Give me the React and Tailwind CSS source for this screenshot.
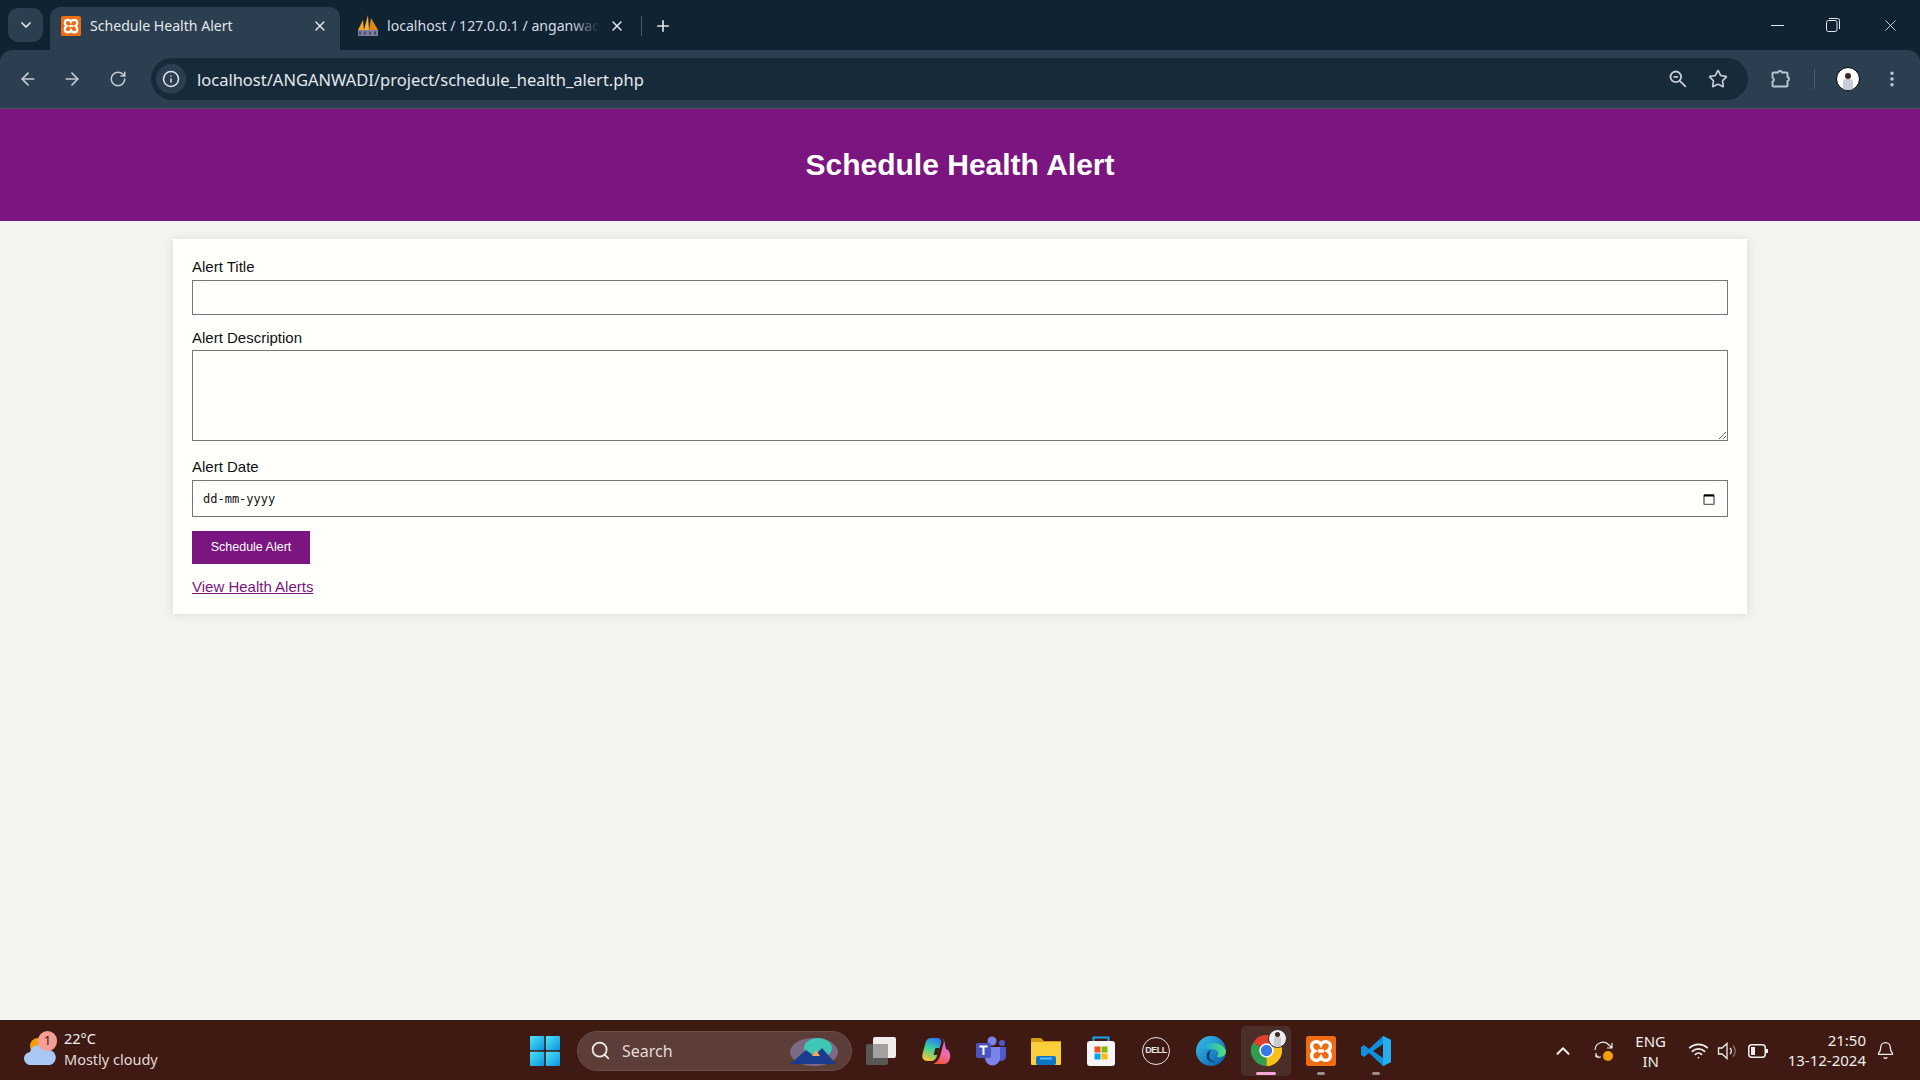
import React from 'react';
import { ArrowLeft, ArrowRight, RotateCw, Info, Star, MoreVertical, X, Plus, ChevronDown, ChevronUp, Search, Wifi, Bell } from 'lucide-react';

function XamppIcon({ size = 20 }) {
  return (
    <svg width={size} height={size} viewBox="0 0 32 32" className="shrink-0">
      <rect width="32" height="32" rx="3" fill="#ee6c14" />
      <path
        d="M11 6c-3 0-5 2-5 5 0 2 1 4 3 5-2 1-3 3-3 5 0 3 2 5 5 5 2 0 4-1 5-3 1 2 3 3 5 3 3 0 5-2 5-5 0-2-1-4-3-5 2-1 3-3 3-5 0-3-2-5-5-5-2 0-4 1-5 3-1-2-3-3-5-3z"
        fill="none"
        stroke="#fff"
        strokeWidth="3.6"
      />
      <path d="M13 16h6" stroke="#fff" strokeWidth="3.6" />
    </svg>
  );
}

function PmaIcon() {
  return (
    <svg width="22" height="22" viewBox="0 0 22 22" className="shrink-0">
      <path d="M1 15 6 5l1 10z" fill="#f5a623" />
      <path d="M7 15 11 0l1 15z" fill="#f9b233" />
      <path d="M12 15 14 3l7 12z" fill="#e08a12" />
      <rect x="1" y="15" width="20" height="6" fill="#7a7d9c" />
      <path d="M3 16.5v3M8 16.5v3M13 16.5v3M18 16.5v3" stroke="#2f3350" strokeWidth="1.4" />
    </svg>
  );
}

function Tab({ active, icon, title, fade }) {
  return (
    <div className={`relative flex items-center h-[43px] w-[290px] rounded-t-[10px] pb-[6px] ${active ? 'bg-[#2b3f50] pl-[11px] pr-[12px]' : 'pl-[9px] pr-[13px]'}`}>
      {icon}
      <span className={`relative font-['Noto_Sans',sans-serif] text-[14.1px] whitespace-nowrap overflow-hidden ${fade ? 'ml-[8px] w-[212px] text-[#d5dde3]' : 'ml-[9px] w-[225px] text-[#e3e8ec]'}`}>
        {title}
        {fade && <span className="absolute right-0 top-0 bottom-0 w-[28px] bg-gradient-to-r from-transparent to-[#0f2333]" />}
      </span>
      <X size={16} strokeWidth={2.2} className="ml-auto text-[#e3e8ec]" />
    </div>
  );
}

function BrowserChrome() {
  return (
    <div className="shrink-0 bg-[#0f2333]">
      <div className="flex items-end h-[50px] pl-[8px]">
        <div className="flex items-center justify-center w-[35px] h-[34px] mb-[8px] rounded-[10px] bg-[#2b3f50] text-[#e3e8ec]">
          <ChevronDown size={16} strokeWidth={2.6} />
        </div>
        <div className="ml-[7px]">
          <Tab active icon={<XamppIcon />} title="Schedule Health Alert" />
        </div>
        <div className="ml-[8px] flex items-center">
          <Tab icon={<PmaIcon />} title="localhost / 127.0.0.1 / anganwadi" fade />
          <div className="w-px h-[20px] mb-[6px] bg-[#4a5b69] ml-[3px]" />
          <Plus size={18} strokeWidth={2.2} className="ml-[12px] mb-[6px] text-[#e3e8ec]" />
        </div>
        <div className="ml-auto self-start flex items-center h-[50px] pr-[20px] text-[#d8dee3]">
          <div className="w-[13px] h-px bg-[#e3e8ec]" />
          <svg width="14" height="14" viewBox="0 0 14 14" className="ml-[42px]" fill="none" stroke="#e3e8ec">
            <rect x="0.5" y="2.5" width="10.5" height="11" rx="2" />
            <path d="M3 .5h8.5a2 2 0 0 1 2 2V11" />
          </svg>
          <X size={19} strokeWidth={1.1} className="ml-[41px] text-[#e3e8ec]" />
        </div>
      </div>
      <div className="flex items-center h-[59px] pb-px rounded-t-[12px] bg-[#2b3f50] border-b border-b-[#45525a] text-[#c4ccd4]">
        <ArrowLeft size={20} strokeWidth={2} className="ml-[18px]" />
        <ArrowRight size={20} strokeWidth={2} className="ml-[24px]" />
        <RotateCw size={18} strokeWidth={2} className="ml-[27px]" />
        <div className="flex items-center ml-[24px] w-[1597px] h-[42px] rounded-full bg-[#172a3a]">
          <div className="flex items-center justify-center ml-[5px] w-[30px] h-[30px] rounded-full bg-[#2b3f50]">
            <Info size={18} strokeWidth={2} className="text-[#dfe4e8]" />
          </div>
          <span className="ml-[11px] pt-[4px] font-['Noto_Sans',sans-serif] text-[16.5px] text-[#e3e8ec]">
            localhost/ANGANWADI/project/schedule_health_alert.php
          </span>
          <svg width="18" height="18" viewBox="0 0 18 18" fill="none" stroke="#c4ccd4" strokeWidth="1.8" className="ml-auto">
            <circle cx="6.8" cy="6.8" r="5.3" />
            <path d="M4.5 6.8h4.6M10.8 10.8l6 6" />
          </svg>
          <Star size={20} strokeWidth={2} className="ml-[21px] mr-[20px]" />
        </div>
        <svg width="22" height="22" viewBox="0 0 22 22" fill="none" stroke="#b8c7d6" strokeWidth="1.9" className="ml-[22px]">
          <path d="M3.5 4.5H8a2.2 2.2 0 0 1 4.2 0h4.3a1 1 0 0 1 1 1V9a2.2 2.2 0 0 1 0 4.2v4.3a1 1 0 0 1-1 1h-13a1 1 0 0 1-1-1v-3.7a2.2 2.2 0 0 0 0-4.1V5.5a1 1 0 0 1 1-1z" />
        </svg>
        <div className="ml-[22px] w-px h-[20px] bg-[#4a5b69]" />
        <div className="relative ml-[21px] w-[24px] h-[24px] rounded-full bg-white border border-black overflow-hidden">
          <div className="absolute left-[8px] top-[5px] w-[6px] h-[6px] rounded-full bg-[#3a2a22]" />
          <div className="absolute left-[6px] top-[11px] w-[10px] h-[12px] rounded-t-[3px] bg-[#c7ccd6]" />
        </div>
        <MoreVertical size={20} strokeWidth={2.2} className="ml-[22px] text-[#b8c7d6]" />
      </div>
    </div>
  );
}

function HealthAlertPage() {
  return (
    <div className="flex-1 min-h-0 bg-[#f3f4ef] font-['Liberation_Sans',sans-serif] text-[#111]">
      <header className="flex items-center justify-center h-[112px] pb-[2px] bg-[#7b1580]">
        <h1 className="text-[30px] font-bold text-white">Schedule Health Alert</h1>
      </header>
      <main className="mx-[173px] mt-[18px] h-[375px] px-[19px] pt-[19px] bg-[#fffffb] shadow-[0_0_9px_rgba(0,0,0,0.1)]">
        <form onSubmit={(e) => e.preventDefault()}>
          <label className="block text-[15px] leading-[17px] mb-[5px]">Alert Title</label>
          <input type="text" className="block w-full h-[35px] px-[9px] border border-[#767676] bg-[#fffffb]" />
          <label className="block mt-[14px] text-[15px] leading-[17px] mb-[4px]">Alert Description</label>
          <textarea className="block w-full h-[91px] px-[9px] border border-[#767676] bg-[#fffffb]" />
          <label className="block mt-[17px] text-[15px] leading-[17px] mb-[5px]">Alert Date</label>
          {/* the headless browser's locale prints mm/dd/yyyy in a native date field */}
          <div className="flex items-center h-[37px] pl-[10px] pr-[12px] border border-[#767676] bg-[#fffffb]">
            <input
              type="text"
              placeholder="dd-mm-yyyy"
              className="flex-1 min-w-0 font-['DejaVu_Sans_Mono',monospace] text-[12px] placeholder:text-[#111] outline-none"
            />
            <svg width="12" height="12" viewBox="0 0 12 12" fill="none">
              <rect x="1" y="2" width="10" height="9.5" rx="1" stroke="#666" strokeWidth="1.4" />
              <path d="M1 2.5h10" stroke="#000" strokeWidth="2" />
            </svg>
          </div>
          <button type="submit" className="block mt-[14px] w-[118px] h-[33px] bg-[#7b1580] text-white text-[12.5px]">
            Schedule Alert
          </button>
          <a href="#" className="inline-block mt-[14px] text-[15px] leading-[17px] text-[#7b1580] underline">
            View Health Alerts
          </a>
        </form>
      </main>
    </div>
  );
}

function WeatherIcon() {
  return (
    <div className="relative w-[34px] h-[36px] shrink-0">
      <svg width="34" height="36" viewBox="0 0 34 36" className="absolute left-0 top-0">
        <circle cx="15" cy="13" r="8" fill="#f59e0b" />
        <path d="M8 32a6.5 6.5 0 0 1-1-13 8.5 8.5 0 0 1 16-2 7.5 7.5 0 0 1 4 15z" fill="#a9c8f5" />
      </svg>
      <div className="absolute left-[15px] -top-[2px] flex items-center justify-center w-[19px] h-[20px] rounded-full bg-[#f79d94] text-[#3f1a13] text-[13px] leading-none">
        1
      </div>
    </div>
  );
}

function WinLogo() {
  return (
    <svg width="30" height="30" viewBox="0 0 30 30" className="shrink-0">
      <defs>
        <linearGradient id="wl" x1="0" y1="0" x2="1" y2="1">
          <stop offset="0" stopColor="#4fe3f7" />
          <stop offset="1" stopColor="#0a94e0" />
        </linearGradient>
      </defs>
      <rect x="0" y="0" width="14.2" height="14.2" rx="1" fill="url(#wl)" />
      <rect x="15.8" y="0" width="14.2" height="14.2" rx="1" fill="url(#wl)" />
      <rect x="0" y="15.8" width="14.2" height="14.2" rx="1" fill="url(#wl)" />
      <rect x="15.8" y="15.8" width="14.2" height="14.2" rx="1" fill="url(#wl)" />
    </svg>
  );
}

function TaskViewIcon() {
  return (
    <svg width="30" height="30" viewBox="0 0 30 30">
      <rect x="0" y="8" width="22" height="21" rx="2" fill="#5a5856" />
      <rect x="7" y="1" width="23" height="21" rx="2" fill="#efeeed" />
      <rect x="7" y="8" width="15" height="14" fill="#a3a1a0" />
    </svg>
  );
}

function CopilotIcon() {
  return (
    <svg width="30" height="30" viewBox="0 0 30 30">
      <defs>
        <linearGradient id="cp2" x1="0.6" y1="0" x2="0.3" y2="1">
          <stop offset="0" stopColor="#2a7df0" />
          <stop offset="0.45" stopColor="#38d0a0" />
          <stop offset="1" stopColor="#f7c72f" />
        </linearGradient>
        <linearGradient id="cp3" x1="0.7" y1="0" x2="0.3" y2="1">
          <stop offset="0" stopColor="#c86bf0" />
          <stop offset="0.55" stopColor="#f06aa8" />
          <stop offset="1" stopColor="#f3552c" />
        </linearGradient>
      </defs>
      <path d="M10 2C7 2 5 4 4.500 7L1.500 18c-1 4 1 7 5 7H10c3 0 5-2 6-5l4-13c.7-3-1-5-3.500-5z" fill="url(#cp2)" />
      <path d="M19 2c2 0 3.500 1.500 4 3.500L20 17c-1 4-4 11-9 11h12c3 0 5-2 6-6 .8-4-.5-8-4-9l-1.500-7C23 3 21.500 2 19 2z" fill="url(#cp3)" />
      <path d="M14.500 12h4l-2 7h-4z" fill="#3f1a13" />
    </svg>
  );
}

function TeamsIcon() {
  return (
    <svg width="30" height="30" viewBox="0 0 30 30">
      <circle cx="16" cy="5" r="4.500" fill="#7b83eb" />
      <circle cx="26" cy="7" r="3" fill="#5059c9" />
      <path d="M21 11h9v9a5 5 0 0 1-9 3z" fill="#5059c9" />
      <path d="M9 11h15v11a7.500 7.500 0 0 1-15 0z" fill="#7b83eb" />
      <rect x="0" y="7" width="15" height="15" rx="2" fill="#4b53bc" />
      <path d="M3.500 10.500h8M7.500 10.500v8.500" stroke="#fff" strokeWidth="2" />
    </svg>
  );
}

function ExplorerIcon() {
  return (
    <svg width="30" height="30" viewBox="0 0 30 30">
      <path d="M0 3a1 1 0 0 1 1-1h9l3 3h17v6H0z" fill="#d49c12" />
      <rect x="0" y="6" width="30" height="23" rx="1" fill="#fbcf3c" />
      <rect x="5" y="20" width="20" height="9" rx="2" fill="#0f73c6" />
      <rect x="9" y="21.500" width="12" height="2" fill="#5cc0f2" />
    </svg>
  );
}

function StoreIcon() {
  return (
    <svg width="30" height="30" viewBox="0 0 30 30">
      <path d="M7.500 9V1.500h15V9" fill="none" stroke="#16a7e8" strokeWidth="2" />
      <rect x="1" y="5" width="28" height="25" rx="3" fill="#f6f6f6" />
      <rect x="8.500" y="10.500" width="6" height="6" fill="#f25022" />
      <rect x="15.500" y="10.500" width="6" height="6" fill="#7fba00" />
      <rect x="8.500" y="17.500" width="6" height="6" fill="#00a4ef" />
      <rect x="15.500" y="17.500" width="6" height="6" fill="#ffb900" />
    </svg>
  );
}

function DellIcon() {
  return (
    <div className="flex items-center justify-center w-[28px] h-[28px] rounded-full border-[1.5px] border-[#e8e6e4] text-[#e8e6e4] font-['Liberation_Sans',sans-serif] font-bold text-[9px] tracking-tighter">
      DELL
    </div>
  );
}

function EdgeIcon() {
  return (
    <svg width="30" height="30" viewBox="0 0 30 30">
      <defs>
        <linearGradient id="ed" x1="0" y1="0" x2="1" y2="1">
          <stop offset="0" stopColor="#35c1f1" />
          <stop offset="1" stopColor="#0c59a4" />
        </linearGradient>
        <linearGradient id="ed2" x1="0" y1="0" x2="1" y2="0">
          <stop offset="0" stopColor="#1fa9d8" />
          <stop offset="1" stopColor="#54e07a" />
        </linearGradient>
      </defs>
      <circle cx="15" cy="15" r="15" fill="url(#ed)" />
      <path d="M8 13C10 5 25 4 30 15c0 5-5 7-9 6 3-4 0-8-5-8-3 0-6 0-8 0z" fill="url(#ed2)" />
      <path d="M15 14c-4 1-6 6-3 10 2 2 5 3 8 2-5 0-9-4-5-12z" fill="#0b3f7a" />
    </svg>
  );
}

function ChromeIcon() {
  return (
    <svg width="31" height="31" viewBox="0 0 30 30">
      <path d="M15 15 2 7.500A15 15 0 0 1 28 7.500z" fill="#e2402f" />
      <path d="M15 15 15 30A15 15 0 0 1 2 7.500z" fill="#2f9e4f" />
      <path d="M15 15 28 7.500A15 15 0 0 1 15 30z" fill="#f7c11a" />
      <circle cx="15" cy="15" r="7" fill="#fff" />
      <circle cx="15" cy="15" r="5.500" fill="#3b78e7" />
    </svg>
  );
}

function VsCodeIcon() {
  return (
    <svg width="30" height="30" viewBox="0 0 30 30">
      <path d="M22 0 30 4v22l-8 4-14-13-5 4-3-2v-8l3-2 5 4z" fill="#0f8fdc" />
      <path d="M22 8 12 15l10 7z" fill="#3f1a13" />
      <path d="M22 0 30 4v22l-8 4z" fill="#27aef0" />
    </svg>
  );
}

function TaskbarApp({ children, dot, active }) {
  return (
    <div className={`relative flex items-center justify-center w-[50px] h-[50px] mr-[5px] rounded-[5px] ${active ? 'bg-[#4c2e28]' : ''}`}>
      {children}
      {dot && (
        <div className={`absolute bottom-[1px] h-[3px] rounded-full ${active ? 'w-[20px] bg-[#f7a4d8]' : 'w-[8px] bg-[#9c8f8b]'}`} />
      )}
    </div>
  );
}

function Taskbar() {
  return (
    <footer className="shrink-0 flex items-center h-[60px] bg-[#3f1a13] border-t border-t-[#2e1d1a] font-['Noto_Sans',sans-serif] text-[#f1eeec]">
      <div className="flex items-center w-[530px] pl-[23px]">
        <WeatherIcon />
        <div className="ml-[7px] pb-[3px] text-[14.5px] leading-[21px]">
          <div>22°C</div>
          <div className="text-[#e2dad7]">Mostly cloudy</div>
        </div>
      </div>
      <WinLogo />
      <div className="flex items-center ml-[17px] w-[275px] h-[40px] pl-[12px] pr-[11px] rounded-full bg-[#5c3d37] border border-[#6b4e48]">
        <Search size={21} strokeWidth={2} className="text-[#efeae8]" />
        <span className="ml-[11px] text-[16px] text-[#e2dad7]">Search</span>
        <svg width="56" height="30" viewBox="0 0 56 30" className="ml-auto">
          <ellipse cx="30" cy="16" rx="24" ry="14" fill="#7f6a86" />
          <ellipse cx="34" cy="12" rx="14" ry="10" fill="#3fc7b5" />
          <path d="M6 28 22 14l8 6 8-8 14 16z" fill="#1c3d8f" />
          <path d="M28 20l4-6 4 6z" fill="#f3a65a" />
        </svg>
      </div>
      <div className="flex items-center ml-[4px]">
        <TaskbarApp><TaskViewIcon /></TaskbarApp>
        <TaskbarApp><CopilotIcon /></TaskbarApp>
        <TaskbarApp><TeamsIcon /></TaskbarApp>
        <TaskbarApp><ExplorerIcon /></TaskbarApp>
        <TaskbarApp><StoreIcon /></TaskbarApp>
        <TaskbarApp><DellIcon /></TaskbarApp>
        <TaskbarApp><EdgeIcon /></TaskbarApp>
        <TaskbarApp active dot>
          <ChromeIcon />
          <div className="absolute right-[4px] top-[3px] w-[19px] h-[19px] rounded-full bg-[#efedec] border border-[#333] overflow-hidden">
            <div className="mx-auto mt-[2px] w-[5px] h-[5px] rounded-full bg-[#3a2a22]" />
            <div className="mx-auto w-[7px] h-[9px] bg-[#c7ccd6]" />
          </div>
        </TaskbarApp>
        <TaskbarApp dot><XamppIcon size={30} /></TaskbarApp>
        <TaskbarApp dot><VsCodeIcon /></TaskbarApp>
      </div>
      <div className="flex items-center ml-auto pr-[25px]">
        <ChevronUp size={22} strokeWidth={2.2} />
        <svg width="22" height="22" viewBox="0 0 22 22" fill="none" stroke="#f1eeec" strokeWidth="1.2" className="ml-[19px]">
          <path d="M2 10a8 8 0 0 1 14-5l3 3M19 3v5h-5" />
          <path d="M3 17h5M3 17v-4M3 15l3 3" />
          <circle cx="15" cy="16" r="5" fill="#f59e0b" stroke="none" />
        </svg>
        <div className="ml-[17px] w-[38px] text-center text-[15px] leading-[20px]">
          <div>ENG</div>
          <div>IN</div>
        </div>
        <Wifi size={21} strokeWidth={2} className="ml-[18px]" />
        <svg width="22" height="20" viewBox="0 0 22 20" fill="none" stroke="#f1eeec" strokeWidth="1.3" className="ml-[8px]">
          <path d="M1.500 7v6h3.500l5 4.500v-15L5 7z" />
          <path d="M13 7a4 4 0 0 1 0 6" />
          <path d="M16 4.500a8 8 0 0 1 0 11" stroke="#8a7470" />
        </svg>
        <svg width="20" height="14" viewBox="0 0 20 14" fill="none" className="ml-[9px]">
          <rect x="0.750" y="0.750" width="16.500" height="12.500" rx="3" stroke="#f1eeec" strokeWidth="1.500" />
          <rect x="3" y="3" width="4" height="8" fill="#f1eeec" />
          <rect x="18" y="5" width="2" height="4" fill="#f1eeec" />
        </svg>
        <div className="ml-[20px] pb-[2px] text-right text-[15px] leading-[20px]">
          <div>21:50</div>
          <div>13-12-2024</div>
        </div>
        <Bell size={19} strokeWidth={1.6} className="ml-[10px]" />
      </div>
    </footer>
  );
}

export default function App() {
  return (
    <div className="flex flex-col w-full h-screen overflow-hidden">
      <BrowserChrome />
      <HealthAlertPage />
      <Taskbar />
    </div>
  );
}
